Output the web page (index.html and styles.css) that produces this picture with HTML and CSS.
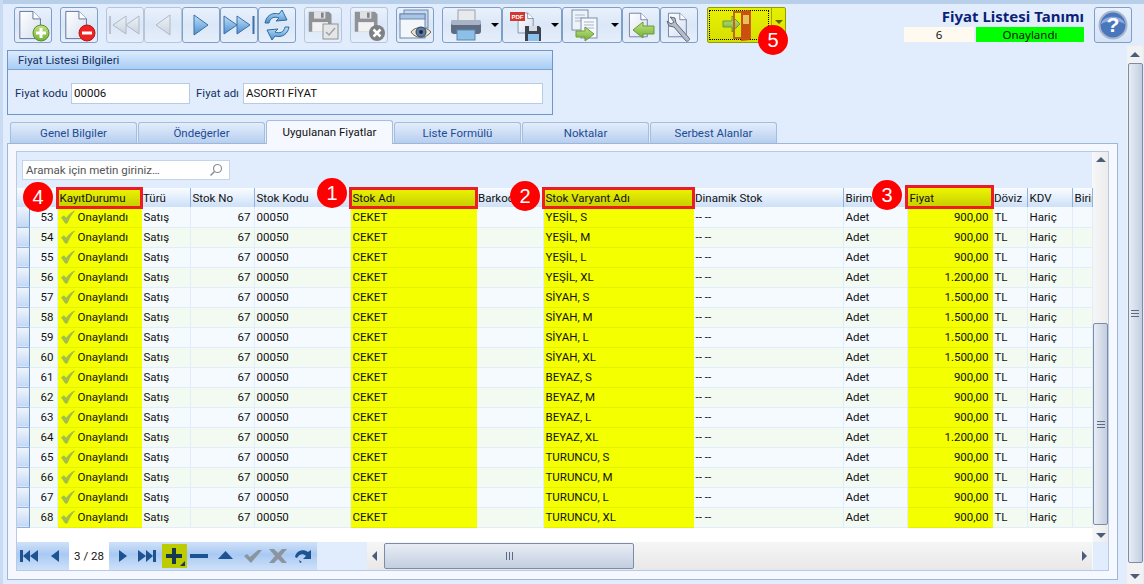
FILE: index.html

```html
<!DOCTYPE html>
<html lang="tr">
<head>
  <meta charset="UTF-8" />
  <title>Fiyat Listesi Tanımı</title>
  <link rel="stylesheet" href="styles.css">
</head>
<body>
  <svg class="defs" width="0" height="0">
    <defs>
      <linearGradient id="pageFill" x1="0" y1="0" x2="1" y2="1"><stop offset="0" stop-color="#ffffff"/><stop offset="1" stop-color="#d5dff0"/></linearGradient>
      <linearGradient id="blueFill" x1="0" y1="0" x2="0" y2="1"><stop offset="0" stop-color="#bfe0f7"/><stop offset="1" stop-color="#4d8fd0"/></linearGradient>
      <linearGradient id="grayFill" x1="0" y1="0" x2="0" y2="1"><stop offset="0" stop-color="#eef2f7"/><stop offset="1" stop-color="#c9d3df"/></linearGradient>
      <linearGradient id="greenFill" x1="0" y1="0" x2="0" y2="1"><stop offset="0" stop-color="#c5e27e"/><stop offset="1" stop-color="#70b13a"/></linearGradient>
      <symbol id="doc" viewBox="0 0 32 32"><path d="M3 1.5h14l8 8v21H3z" fill="url(#pageFill)" stroke="#5f6f97"/><path d="M17 1.5v8h8" fill="#fff" stroke="#5f6f97"/></symbol>
      <symbol id="floppy" viewBox="0 0 32 32"><path d="M2 3h23l3 3v20H2z" fill="#8f9296"/><rect x="8" y="3" width="13" height="8" fill="#dfe1e3"/><rect x="16" y="4" width="3" height="6" fill="#808387"/><rect x="6" y="15" width="18" height="11" fill="#f2f2f2"/></symbol>
      <symbol id="tick" viewBox="0 0 16 16"><path d="M.5 8.500l3-2 2.500 3C8 6 11 3 15.500 1 12 5 9 10 7 15H5z" fill="#a3c04f" stroke="#8aa544" stroke-width=".5"/></symbol>
    </defs>
  </svg>

  <div class="topline"></div>

  <header class="toolbar">
    <div class="tools">
      <button class="tool"><svg width="34" height="34" viewBox="0 0 34 34"><use href="#doc" width="30" height="32" x="1" y="1"/><circle cx="25" cy="25" r="8" fill="url(#greenFill)" stroke="#5b8f2b"/><path d="M25 20v10M20 25h10" stroke="#fff" stroke-width="3"/></svg></button>
      <button class="tool gap"><svg width="34" height="34" viewBox="0 0 34 34"><use href="#doc" width="30" height="32" x="1" y="1"/><circle cx="25" cy="25" r="8" fill="#ee2222" stroke="#b51717"/><path d="M20 25h10" stroke="#fff" stroke-width="3"/></svg></button>
      <button class="tool gap off"><svg width="34" height="24" viewBox="0 0 34 24"><path d="M2 3v18" stroke="#b9c2cd" stroke-width="2"/><path d="M18 3L5 12l13 9zM31 3L18 12l13 9z" fill="url(#grayFill)" stroke="#b0b9c4"/></svg></button>
      <button class="tool off"><svg width="22" height="24" viewBox="0 0 22 24"><path d="M18 2L4 12l14 10z" fill="url(#grayFill)" stroke="#b0b9c4"/></svg></button>
      <button class="tool"><svg width="22" height="24" viewBox="0 0 22 24"><path d="M4 2l14 10L4 22z" fill="url(#blueFill)" stroke="#3c6ea8"/></svg></button>
      <button class="tool"><svg width="34" height="24" viewBox="0 0 34 24"><path d="M2 3l13 9-13 9zM15 3l13 9-13 9z" fill="url(#blueFill)" stroke="#3c6ea8"/><path d="M31.500 3v18" stroke="#3c6ea8" stroke-width="2"/></svg></button>
      <button class="tool"><svg width="34" height="34" viewBox="0 0 34 34"><path d="M5 15C6 8 12 4 19 6l3-4 5 10-11 1 3-3c-5-2-9 0-10 5z" fill="url(#blueFill)" stroke="#2c6aa0"/><path d="M29 19c-1 7-7 11-14 9l-3 4-5-10 11-1-3 3c5 2 9 0 10-5z" fill="url(#blueFill)" stroke="#2c6aa0"/></svg></button>
      <button class="tool gap off"><svg width="34" height="34" viewBox="0 0 34 34"><use href="#floppy" width="28" height="28" y="1" x="1"/><rect x="17" y="16" width="15" height="15" fill="#e4e6e8" stroke="#8f9296"/><path d="M20 24l3 3 6-7" fill="none" stroke="#9fa3a8" stroke-width="1.500"/></svg></button>
      <button class="tool gap off"><svg width="34" height="34" viewBox="0 0 34 34"><use href="#floppy" width="28" height="28" y="1" x="1"/><circle cx="25" cy="25" r="8" fill="#7d8084"/><path d="M21.500 21.500l7 7M28.500 21.500l-7 7" stroke="#fff" stroke-width="2.500"/></svg></button>
      <button class="tool gap"><svg width="34" height="34" viewBox="0 0 34 34"><rect x="6" y="2" width="24" height="18" fill="#c6d8ee" stroke="#6d87ad"/><rect x="2" y="6" width="25" height="24" fill="#f3f7fc" stroke="#6d87ad"/><rect x="2" y="6" width="25" height="5" fill="#a9c5e6" stroke="#6d87ad"/><path d="M13 24c4-6 15-6 20 0-5 7-16 7-20 0z" fill="#e8e2d3" stroke="#6f6a5a"/><circle cx="23" cy="24" r="5" fill="#5a7ba5" stroke="#33465f"/><circle cx="23" cy="24" r="2" fill="#1d2a3b"/></svg></button>
      <button class="tool wide gap"><svg width="34" height="34" viewBox="0 0 34 34"><rect x="9" y="2" width="17" height="11" fill="#e7e9ec" stroke="#9aa2ad"/><rect x="2" y="12" width="30" height="14" rx="3" fill="#5f6b80"/><rect x="2" y="12" width="30" height="5" rx="2" fill="#a8b4c6"/><rect x="8" y="22" width="18" height="10" fill="#8cc0e8" stroke="#5d89ad"/></svg><i class="caret"></i></button>
      <button class="tool wide"><svg width="34" height="34" viewBox="0 0 34 34"><use href="#doc" width="22" height="28" x="7" y="1"/><rect x="1" y="4" width="15" height="9" fill="#d0392f"/><text x="2.500" y="11" class="pdf">PDF</text><path d="M16 18h14l2 2v13H16z" fill="#3b4352"/><rect x="20" y="18" width="8" height="5" fill="#d8dde4"/><rect x="19" y="26" width="11" height="7" fill="#8dc0ea"/></svg><i class="caret"></i></button>
      <button class="tool wide"><svg width="34" height="34" viewBox="0 0 34 34"><rect x="3" y="2" width="16" height="20" fill="#eef3fa" stroke="#7d8fa9"/><path d="M6 7h10M6 10h10M6 13h10" stroke="#a7b5c9"/><rect x="12" y="10" width="16" height="20" fill="#f5f8fc" stroke="#7d8fa9"/><path d="M15 14h10M15 17h10M15 20h10" stroke="#a7b5c9"/><path d="M7 23h9v-4l9 7-9 7v-4H7z" fill="url(#greenFill)" stroke="#6a9a3b"/></svg><i class="caret"></i></button>
      <button class="tool"><svg width="34" height="34" viewBox="0 0 34 34"><use href="#doc" width="26" height="32" x="3" y="1"/><path d="M9 22l10-8v4h11v8H19v4z" fill="url(#greenFill)" stroke="#6a9a3b"/></svg></button>
      <button class="tool"><svg width="34" height="34" viewBox="0 0 34 34"><use href="#doc" width="26" height="32" x="4" y="1"/><path d="M8 9l5 1 1 5 13 15c2 2-2 4-3 3L12 19l-5-1-2-5 4 3 3-2-3-4z" fill="#b4bdc9" stroke="#5f6a7c"/></svg></button>
    </div>
    <div class="run-btn">
      <div class="run-main"><svg width="34" height="32" viewBox="0 0 34 32"><path d="M1 12h9V7l8 8-8 8v-5H1z" fill="url(#greenFill)" stroke="#6a9a3b"/><rect x="12" y="3" width="16" height="26" fill="none" stroke="#c4641f" stroke-width="2"/><path d="M19 2l9-1v30l-9 1z" fill="#c9500f"/><path d="M21 6h6v9h-6z" fill="#e6c25c"/></svg></div>
      <div class="run-drop"><i class="caret"></i></div>
    </div>
    <div class="title-block">
      <h1>Fiyat Listesi Tanımı</h1>
      <div class="status-row"><span class="rec-no">6</span><span class="rec-state">Onaylandı</span></div>
    </div>
    <button class="tool help"><svg width="30" height="30" viewBox="0 0 30 30"><circle cx="15" cy="15" r="13.500" fill="#4a76bb" stroke="#a9b5cf" stroke-width="2"/><path d="M3 14C5 5 24 4 27 14 20 10 10 10 3 14z" fill="#8caade"/><text x="15" y="22" class="qmark">?</text></svg></button>
  </header>

  <div class="page">
    <main class="content">
      <section class="group">
        <div class="group-head">Fiyat Listesi Bilgileri</div>
        <div class="group-body">
          <label class="lbl-kod" for="kod">Fiyat kodu</label>
          <input id="kod" class="kod" value="00006">
          <label class="lbl-ad" for="ad">Fiyat adı</label>
          <input id="ad" class="ad" value="ASORTI FİYAT">
        </div>
      </section>

      <nav class="tabs">
        <a class="tab">Genel Bilgiler</a>
        <a class="tab">Öndeğerler</a>
        <a class="tab active">Uygulanan Fiyatlar</a>
        <a class="tab">Liste Formülü</a>
        <a class="tab">Noktalar</a>
        <a class="tab">Serbest Alanlar</a>
      </nav>

      <section class="tab-panel">
        <div class="grid-box">
          <div class="grid-left">
            <div class="search-row">
              <div class="search">Aramak için metin giriniz…
                <svg width="14" height="14" viewBox="0 0 14 14"><circle cx="8.500" cy="5.500" r="4" fill="none" stroke="#8a8f96" stroke-width="1.200"/><path d="M5.500 8.500L1.500 12.500" stroke="#8a8f96" stroke-width="1.600"/></svg>
              </div>
            </div>
            <table class="grid">
              <colgroup>
                <col class="c12"><col class="c28"><col class="c84"><col class="c49"><col class="c64"><col class="c96"><col class="c126"><col class="c67"><col class="c150"><col class="c150"><col class="c64"><col class="c85"><col class="c35"><col class="c45"><col class="c20">
              </colgroup>
              <thead>
                <tr>
                  <th></th><th></th><th class="hl">KayıtDurumu</th><th>Türü</th><th>Stok No</th><th>Stok Kodu</th><th class="hl">Stok Adı</th><th>Barkod</th><th class="hl">Stok Varyant Adı</th><th>Dinamik Stok</th><th>Birim</th><th class="hl tall">Fiyat</th><th>Döviz</th><th>KDV</th><th>Birim</th>
                </tr>
              </thead>
              <tbody>
                <tr><td class="ind"></td><td class="num">53</td><td class="y"><svg class="tk"><use href="#tick"/></svg>Onaylandı</td><td>Satış</td><td class="num">67</td><td>00050</td><td class="y">CEKET</td><td></td><td class="y">YEŞİL, S</td><td>-- --</td><td>Adet</td><td class="y num">900,00</td><td>TL</td><td>Hariç</td><td></td></tr>
                <tr><td class="ind"></td><td class="num">54</td><td class="y"><svg class="tk"><use href="#tick"/></svg>Onaylandı</td><td>Satış</td><td class="num">67</td><td>00050</td><td class="y">CEKET</td><td></td><td class="y">YEŞİL, M</td><td>-- --</td><td>Adet</td><td class="y num">900,00</td><td>TL</td><td>Hariç</td><td></td></tr>
                <tr><td class="ind"></td><td class="num">55</td><td class="y"><svg class="tk"><use href="#tick"/></svg>Onaylandı</td><td>Satış</td><td class="num">67</td><td>00050</td><td class="y">CEKET</td><td></td><td class="y">YEŞİL, L</td><td>-- --</td><td>Adet</td><td class="y num">900,00</td><td>TL</td><td>Hariç</td><td></td></tr>
                <tr><td class="ind"></td><td class="num">56</td><td class="y"><svg class="tk"><use href="#tick"/></svg>Onaylandı</td><td>Satış</td><td class="num">67</td><td>00050</td><td class="y">CEKET</td><td></td><td class="y">YEŞİL, XL</td><td>-- --</td><td>Adet</td><td class="y num">1.200,00</td><td>TL</td><td>Hariç</td><td></td></tr>
                <tr><td class="ind"></td><td class="num">57</td><td class="y"><svg class="tk"><use href="#tick"/></svg>Onaylandı</td><td>Satış</td><td class="num">67</td><td>00050</td><td class="y">CEKET</td><td></td><td class="y">SİYAH, S</td><td>-- --</td><td>Adet</td><td class="y num">1.500,00</td><td>TL</td><td>Hariç</td><td></td></tr>
                <tr><td class="ind"></td><td class="num">58</td><td class="y"><svg class="tk"><use href="#tick"/></svg>Onaylandı</td><td>Satış</td><td class="num">67</td><td>00050</td><td class="y">CEKET</td><td></td><td class="y">SİYAH, M</td><td>-- --</td><td>Adet</td><td class="y num">1.500,00</td><td>TL</td><td>Hariç</td><td></td></tr>
                <tr><td class="ind"></td><td class="num">59</td><td class="y"><svg class="tk"><use href="#tick"/></svg>Onaylandı</td><td>Satış</td><td class="num">67</td><td>00050</td><td class="y">CEKET</td><td></td><td class="y">SİYAH, L</td><td>-- --</td><td>Adet</td><td class="y num">1.500,00</td><td>TL</td><td>Hariç</td><td></td></tr>
                <tr><td class="ind"></td><td class="num">60</td><td class="y"><svg class="tk"><use href="#tick"/></svg>Onaylandı</td><td>Satış</td><td class="num">67</td><td>00050</td><td class="y">CEKET</td><td></td><td class="y">SİYAH, XL</td><td>-- --</td><td>Adet</td><td class="y num">1.500,00</td><td>TL</td><td>Hariç</td><td></td></tr>
                <tr><td class="ind"></td><td class="num">61</td><td class="y"><svg class="tk"><use href="#tick"/></svg>Onaylandı</td><td>Satış</td><td class="num">67</td><td>00050</td><td class="y">CEKET</td><td></td><td class="y">BEYAZ, S</td><td>-- --</td><td>Adet</td><td class="y num">900,00</td><td>TL</td><td>Hariç</td><td></td></tr>
                <tr><td class="ind"></td><td class="num">62</td><td class="y"><svg class="tk"><use href="#tick"/></svg>Onaylandı</td><td>Satış</td><td class="num">67</td><td>00050</td><td class="y">CEKET</td><td></td><td class="y">BEYAZ, M</td><td>-- --</td><td>Adet</td><td class="y num">900,00</td><td>TL</td><td>Hariç</td><td></td></tr>
                <tr><td class="ind"></td><td class="num">63</td><td class="y"><svg class="tk"><use href="#tick"/></svg>Onaylandı</td><td>Satış</td><td class="num">67</td><td>00050</td><td class="y">CEKET</td><td></td><td class="y">BEYAZ, L</td><td>-- --</td><td>Adet</td><td class="y num">900,00</td><td>TL</td><td>Hariç</td><td></td></tr>
                <tr><td class="ind"></td><td class="num">64</td><td class="y"><svg class="tk"><use href="#tick"/></svg>Onaylandı</td><td>Satış</td><td class="num">67</td><td>00050</td><td class="y">CEKET</td><td></td><td class="y">BEYAZ, XL</td><td>-- --</td><td>Adet</td><td class="y num">1.200,00</td><td>TL</td><td>Hariç</td><td></td></tr>
                <tr><td class="ind"></td><td class="num">65</td><td class="y"><svg class="tk"><use href="#tick"/></svg>Onaylandı</td><td>Satış</td><td class="num">67</td><td>00050</td><td class="y">CEKET</td><td></td><td class="y">TURUNCU, S</td><td>-- --</td><td>Adet</td><td class="y num">900,00</td><td>TL</td><td>Hariç</td><td></td></tr>
                <tr><td class="ind"></td><td class="num">66</td><td class="y"><svg class="tk"><use href="#tick"/></svg>Onaylandı</td><td>Satış</td><td class="num">67</td><td>00050</td><td class="y">CEKET</td><td></td><td class="y">TURUNCU, M</td><td>-- --</td><td>Adet</td><td class="y num">900,00</td><td>TL</td><td>Hariç</td><td></td></tr>
                <tr><td class="ind"></td><td class="num">67</td><td class="y"><svg class="tk"><use href="#tick"/></svg>Onaylandı</td><td>Satış</td><td class="num">67</td><td>00050</td><td class="y">CEKET</td><td></td><td class="y">TURUNCU, L</td><td>-- --</td><td>Adet</td><td class="y num">900,00</td><td>TL</td><td>Hariç</td><td></td></tr>
                <tr><td class="ind"></td><td class="num">68</td><td class="y"><svg class="tk"><use href="#tick"/></svg>Onaylandı</td><td>Satış</td><td class="num">67</td><td>00050</td><td class="y">CEKET</td><td></td><td class="y">TURUNCU, XL</td><td>-- --</td><td>Adet</td><td class="y num">900,00</td><td>TL</td><td>Hariç</td><td></td></tr>
              </tbody>
            </table>
            <div class="grid-fill"></div>
            <div class="grid-foot">
              <div class="pager">
                <svg class="pg first" width="18" height="14" viewBox="0 0 18 14"><path d="M0 1h3v12H0zM10 1L3 7l7 6zM18 1l-8 6 8 6z" fill="#1c5390"/></svg>
                <svg class="pg prev" width="10" height="14" viewBox="0 0 10 14"><path d="M9 1L1 7l8 6z" fill="#1c5390"/></svg>
                <span class="pos">3 / 28</span>
                <svg class="pg next" width="10" height="14" viewBox="0 0 10 14"><path d="M1 1l8 6-8 6z" fill="#1c5390"/></svg>
                <svg class="pg last" width="18" height="14" viewBox="0 0 18 14"><path d="M0 1l8 6-8 6zM8 1l7 6-7 6zM15 1h3v12h-3z" fill="#1c5390"/></svg>
                <span class="add"><svg width="25" height="24" viewBox="0 0 25 24"><path d="M10 4h4v6h6v4h-6v6h-4v-6H4v-4h6z" fill="#17384f"/><path d="M23 17v5h-5z" fill="#17384f"/></svg></span>
                <svg class="pg minus" width="18" height="14" viewBox="0 0 18 14"><path d="M0 5h18v4H0z" fill="#1c5390"/></svg>
                <svg class="pg up" width="15" height="14" viewBox="0 0 15 14"><path d="M7.500 2L15 10H0z" fill="#1c5390"/></svg>
                <svg class="pg ok" width="18" height="14" viewBox="0 0 18 14"><path d="M0 7l3-2 3 3 8-7h4L7 14z" fill="#8c959e"/></svg>
                <svg class="pg cancel" width="18" height="14" viewBox="0 0 18 14"><path d="M0 0h5l4 4 4-4h5l-6 7 6 7h-5l-4-4-4 4H0l6-7z" fill="#8c959e"/></svg>
                <svg class="pg redo" width="19" height="14" viewBox="0 0 19 14"><path d="M0 8C1 2 8-1 13 3l3-2v9h-8l3-3C8 4 4 5 2 9z M4 11l3 2-2 1z" fill="#1c5390"/></svg>
              </div>
              <div class="foot-gap"></div>
              <div class="hscroll">
                <i class="arr-l"></i>
                <div class="hthumb"><b></b></div>
                <i class="arr-r"></i>
              </div>
            </div>
          </div>
          <div class="grid-right">
            <div class="vscroll">
              <i class="arr-u"></i>
              <div class="v-space"></div>
              <div class="vthumb"><b></b></div>
              <i class="arr-d"></i>
            </div>
            <div class="corner"></div>
          </div>
        </div>
      </section>
    </main>
    <aside class="page-scroll">
      <i class="arr-u"></i>
      <div class="pthumb"><b></b></div>
      <i class="arr-d"></i>
    </aside>
  </div>

  <span class="badge b1">1</span>
  <span class="badge b2">2</span>
  <span class="badge b3">3</span>
  <span class="badge b4">4</span>
  <span class="badge b5">5</span>
</body>
</html>
```

FILE: styles.css

```css
* {
  box-sizing: border-box;
}
html, body {
  margin: 0;
  height: 584px;
  overflow: hidden;
}
body {
  position: relative;
  width: 1144px;
  border-left: 3px solid #c9dbf2;
  background-color: #e1edfd;
  color: #111;
  font-family: Roboto, "Noto Sans", sans-serif;
  font-size: 11.5px;
}
.defs {
  position: absolute;
}
.topline {
  height: 4px;
  margin-left: -3px;
  background-color: #b8cfe9;
}

/* toolbar */
.toolbar {
  display: flex;
  height: 42px;
  padding: 3px 12px 0 11px;
}
.tools {
  display: flex;
}
.tool {
  display: flex;
  align-items: center;
  justify-content: center;
  width: 38px;
  height: 36px;
  padding: 0;
  border: 1px solid #7f9fc7;
  border-radius: 3px;
  background: linear-gradient(#e9f1fc, #dbe7f7 50%, #e6effb);
}
.tool.off {
  border-color: #b4c6dd;
}
.tool.gap {
  margin-left: 8px;
}
.tool.wide {
  width: 60px;
  justify-content: flex-start;
  padding-left: 6px;
}
.caret {
  margin-left: 8px;
  border-top: 4px solid #000;
  border-left: 4px solid transparent;
  border-right: 4px solid transparent;
}
.pdf {
  font-family: "Liberation Sans", sans-serif;
  font-size: 6px;
  font-weight: bold;
  fill: #fff;
}
.run-btn {
  display: flex;
  width: 79px;
  height: 36px;
  margin-left: 9px;
  border: 1px solid #8f9e00;
  border-radius: 2px;
  background: linear-gradient(#e8f000, #d6e000);
}
.run-main {
  display: flex;
  align-items: center;
  justify-content: center;
  width: 60px;
  margin: 2px 0 2px 1px;
  border: 1px dotted #000;
}
.run-drop {
  flex: 1;
  margin-left: 2px;
  padding-top: 12px;
  border-left: 1px solid #9aa800;
}
.run-drop .caret {
  display: block;
  width: 0;
  margin-left: 3px;
  border-top-color: #5b6400;
}
.title-block {
  width: 180px;
  margin: -2px 10px 0 auto;
}
.title-block h1 {
  margin: 0;
  height: 22px;
  color: #0d1f78;
  font-family: "Noto Sans", sans-serif;
  font-size: 15px;
  font-weight: bold;
  line-height: 22px;
  text-align: right;
}
.status-row {
  display: flex;
  gap: 2px;
  height: 15px;
  font-family: "Noto Sans", sans-serif;
  line-height: 15px;
  text-align: center;
}
.rec-no {
  width: 70px;
  background-color: #fffaf0;
}
.rec-state {
  width: 108px;
  background-color: #00ff00;
}
.help {
  background: linear-gradient(#e9f1fc, #d5e3f6);
}
.qmark {
  font-family: "Liberation Sans", sans-serif;
  font-size: 21px;
  font-weight: bold;
  fill: #fff;
  text-anchor: middle;
}

/* body of page */
.page {
  display: flex;
  height: 538px;
}
.content {
  width: 1124px;
  padding: 4px 0 0 4px;
}
.group {
  width: 546px;
  height: 65px;
  border: 1px solid #6f96cb;
  background-color: #e1edfd;
}
.group-head {
  height: 19px;
  padding-left: 10px;
  border-bottom: 1px solid #7ea3d4;
  background: linear-gradient(#dcebfd, #a9cdf6);
  color: #16305f;
  line-height: 18px;
}
.group-body {
  display: flex;
  align-items: center;
  height: 44px;
  padding: 2px 0 0 7px;
  color: #16305f;
}
.group-body input {
  height: 21px;
  padding: 0 2px;
  border: 1px solid #b9cbe3;
  background-color: #fff;
  color: #111;
  font: inherit;
}
.lbl-kod {
  width: 56px;
}
.lbl-ad {
  width: 47px;
}
.kod {
  width: 119px;
  margin-right: 6px;
}
.ad {
  width: 300px;
}
.tabs {
  display: flex;
  gap: 1px;
  align-items: flex-end;
  height: 28px;
  margin-left: 3px;
}
.tab {
  width: 127px;
  height: 21px;
  border: 1px solid #a6bddc;
  border-bottom: none;
  border-radius: 3px 3px 0 0;
  background: linear-gradient(#e3edfb, #b6cfef);
  color: #1f4b94;
  line-height: 20px;
  text-align: center;
}
.tab.active {
  position: relative;
  height: 24px;
  margin-bottom: -1px;
  background: #f5f9ff;
  color: #111;
  line-height: 23px;
}
.tab-panel {
  width: 1111px;
  height: 437px;
  padding: 7px 8px 8px 8px;
  border: 1px solid #9db6d9;
  background-color: #f5f9ff;
}
.grid-box {
  display: flex;
  width: 1093px;
  height: 420px;
  border: 1px solid #b8cbe6;
}
.grid-left {
  display: flex;
  flex-direction: column;
  width: 1075px;
}
.search-row {
  height: 36px;
  padding: 8px 0 0 5px;
  background-color: #e1edfd;
}
.search {
  display: flex;
  align-items: center;
  justify-content: space-between;
  width: 208px;
  height: 20px;
  padding: 0 6px 0 3px;
  border: 1px solid #c5d4e8;
  background-color: #fff;
  color: #555;
}

/* grid */
.grid {
  width: 1075px;
  border-collapse: collapse;
  table-layout: fixed;
}
.c12 { width: 12px; }
.c20 { width: 20px; }
.c28 { width: 28px; }
.c35 { width: 35px; }
.c45 { width: 45px; }
.c49 { width: 49px; }
.c64 { width: 64px; }
.c67 { width: 67px; }
.c84 { width: 84px; }
.c85 { width: 85px; }
.c96 { width: 96px; }
.c126 { width: 126px; }
.c150 { width: 150px; }
.grid th {
  height: 19px;
  padding: 0 2px;
  border-right: 1px solid #8fb2e0;
  background: linear-gradient(#fafcff, #cde0f8);
  font-weight: normal;
  text-align: left;
  white-space: nowrap;
  overflow: hidden;
}
.grid th.hl {
  position: relative;
  z-index: 1;
  overflow: visible;
  border-right: none;
  background: linear-gradient(#eef400, #c3cf00);
}
.grid th.hl::after {
  content: "";
  position: absolute;
  top: -1px;
  right: -2px;
  bottom: -2px;
  left: -2px;
  border: 3px solid #ed1c24;
}
.grid th.tall::after {
  top: -3px;
  left: -3px;
}
.grid td {
  height: 20px;
  padding: 0 2px;
  border-right: 1px solid #e2edfb;
  border-bottom: 1px solid #e2edfb;
  background-color: #f5faff;
  white-space: nowrap;
  overflow: hidden;
}
.grid tr:nth-child(even) td {
  background-color: #f3faf2;
}
.grid tr td.ind {
  border-right: 1px solid #6f9ad2;
  border-bottom: 1px solid #8fb2e0;
  background: linear-gradient(#eef4fd, #c3d8f4);
}
.grid td.num {
  padding-right: 3px;
  text-align: right;
}
.grid tr:nth-child(n) td.y {
  border-right-color: #f4ff00;
  border-bottom-color: #e6f000;
  background-color: #f4ff00;
}
.tk {
  width: 14px;
  height: 14px;
  margin: 0 3px 0 1px;
  vertical-align: -3px;
}
.grid-fill {
  flex: 1;
  background-color: #fff;
}

/* bottom bar of grid */
.grid-foot {
  display: flex;
  height: 28px;
}
.pager {
  display: flex;
  align-items: center;
  width: 300px;
  padding-left: 3px;
  background: linear-gradient(#cfe1f9, #a9c9f3 45%, #cfe1f9);
}
.pg {
  flex: none;
}
.prev { margin-left: 12px; }
.pos {
  width: 40px;
  height: 28px;
  margin-left: 9px;
  background-color: #fff;
  line-height: 28px;
  text-align: center;
}
.next { margin-left: 9px; }
.last { margin-left: 10px; }
.add {
  height: 24px;
  margin-left: 6px;
  background-color: #bccc00;
}
.minus { margin-left: 3px; }
.up { margin-left: 10px; }
.ok { margin-left: 11px; }
.cancel { margin-left: 7px; }
.redo { margin-left: 8px; }
.foot-gap {
  width: 50px;
  background-color: #e1edfd;
}
.hscroll {
  display: flex;
  flex: 1;
  align-items: center;
  background: linear-gradient(#f6f6f6, #e8e8e8);
}
.arr-l {
  margin: 0 7px 0 5px;
  border-right: 5px solid #4a5d78;
  border-top: 5px solid transparent;
  border-bottom: 5px solid transparent;
}
.arr-r {
  margin: 0 5px 0 auto;
  border-left: 5px solid #4a5d78;
  border-top: 5px solid transparent;
  border-bottom: 5px solid transparent;
}
.hthumb {
  display: flex;
  align-items: center;
  justify-content: center;
  width: 250px;
  height: 26px;
  border: 1px solid #7d8ca6;
  border-radius: 2px;
  background: linear-gradient(#e8edf5, #c3cee0);
}
.hthumb b {
  width: 7px;
  height: 8px;
  background: repeating-linear-gradient(90deg, #5c6b85 0 1px, transparent 1px 3px);
}
.grid-right {
  display: flex;
  flex-direction: column;
  width: 16px;
  margin-left: 1px;
}
.vscroll {
  display: flex;
  flex: 1;
  flex-direction: column;
  align-items: center;
  background: linear-gradient(90deg, #f6f6f6, #ececec);
}
.arr-u {
  flex: none;
  margin-top: 5px;
  border-bottom: 5px solid #4a5d78;
  border-left: 5px solid transparent;
  border-right: 5px solid transparent;
}
.arr-d {
  flex: none;
  margin: auto 0 4px;
  border-top: 5px solid #4a5d78;
  border-left: 5px solid transparent;
  border-right: 5px solid transparent;
}
.v-space {
  height: 161px;
}
.vthumb, .pthumb {
  display: flex;
  flex: none;
  align-items: center;
  justify-content: center;
  width: 15px;
  border: 1px solid #7d8ca6;
  border-radius: 2px;
  background: linear-gradient(90deg, #e8edf5, #c3cee0);
}
.vthumb {
  height: 202px;
}
.vthumb b, .pthumb b {
  width: 8px;
  height: 7px;
  background: repeating-linear-gradient(#5c6b85 0 1px, transparent 1px 3px);
}
.corner {
  height: 28px;
  background-color: #e1edfd;
}

/* outer scrollbar */
.page-scroll {
  display: flex;
  flex-direction: column;
  align-items: center;
  width: 16px;
  background-color: #f2f2f2;
}
.page-scroll .arr-u {
  margin-top: 6px;
  margin-bottom: 6px;
}
.pthumb {
  height: 500px;
}
.page-scroll .arr-d {
  margin-bottom: 5px;
}

/* numbered marks over the screenshot */
.badge {
  position: absolute;
  z-index: 2;
  width: 30px;
  height: 30px;
  border-radius: 50%;
  background-color: #ff0000;
  color: #fff;
  font-family: "Liberation Sans", sans-serif;
  font-size: 20px;
  line-height: 30px;
  text-align: center;
}
.b1 { left: 314px; top: 178px; }
.b2 { left: 507px; top: 181px; }
.b3 { left: 869px; top: 180px; }
.b4 { left: 20px; top: 182px; }
.b5 { left: 755px; top: 25px; }
```
